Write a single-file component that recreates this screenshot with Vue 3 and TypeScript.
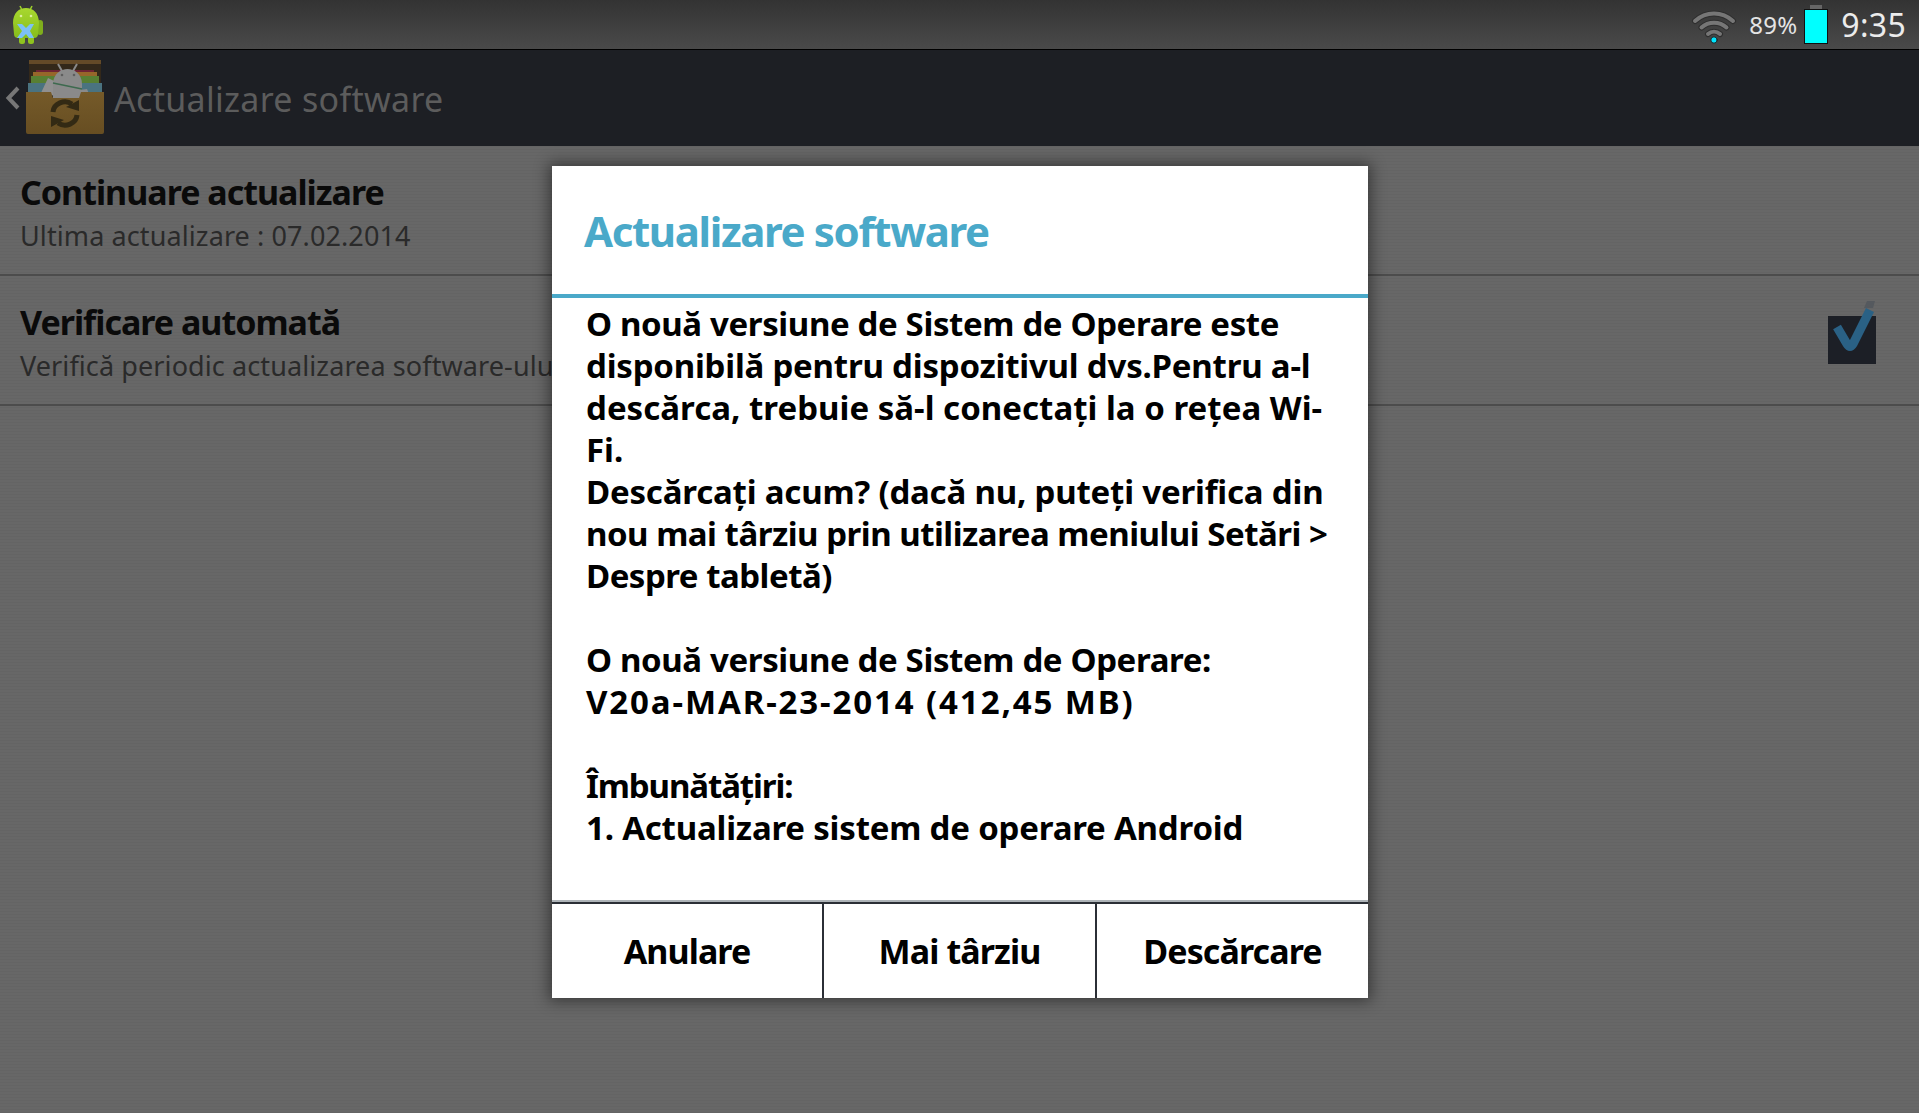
<template>
  <div class="screen">
    <!-- Status bar -->
    <div class="status-bar">
      <svg class="notif-icon" width="32" height="40" viewBox="0 0 32 40">
        <defs>
          <linearGradient id="lime" x1="0" y1="0" x2="0" y2="1">
            <stop offset="0" stop-color="#a8d82f" />
            <stop offset="1" stop-color="#86bd1c" />
          </linearGradient>
        </defs>
        <line x1="8" y1="1" x2="10" y2="5" stroke="#9ccf2b" stroke-width="1.5" />
        <line x1="20" y1="1" x2="18" y2="5" stroke="#9ccf2b" stroke-width="1.5" />
        <rect x="25" y="15" width="6" height="15" rx="3" fill="#7fae1c" />
        <rect x="7" y="30" width="6" height="9" rx="2.500" fill="#8fc31f" />
        <rect x="16" y="30" width="6" height="9" rx="2.500" fill="#8fc31f" />
        <path d="M1 18 C1 8 7 3 14 3 C21 3 27 8 27 18 L26 29 Q26 33 22 33 L6 33 Q2 33 2 29 Z" fill="url(#lime)" />
        <circle cx="9" cy="11" r="1.300" fill="#dcefa0" />
        <circle cx="19" cy="11" r="1.300" fill="#dcefa0" />
        <path d="M5 19 L10 19 L14 23 L18 19 L22 19 L18 26 L22 33 L17 33 L14 29 L10 33 L5 33 L10 26 Z" fill="#7cc0f5" />
      </svg>
      <div class="status-right">
        <svg class="wifi" width="46" height="36" viewBox="0 0 46 36" fill="none" stroke-linecap="round">
          <g stroke="#2e2e2e" stroke-width="6">
            <path d="M4 13 C15 3 31 3 42 13" />
            <path d="M10.500 19.500 C17.500 13 28.500 13 35.500 19.500" />
            <path d="M17 26 C20.500 23 25.500 23 29 26" />
          </g>
          <g stroke="#767676" stroke-width="4">
            <path d="M4 13 C15 3 31 3 42 13" />
            <path d="M10.500 19.500 C17.500 13 28.500 13 35.500 19.500" />
            <path d="M17 26 C20.500 23 25.500 23 29 26" />
          </g>
          <circle cx="23" cy="32" r="3.200" fill="#00e5ff" stroke="#222" stroke-width="1" />
        </svg>
        <span class="percent">89%</span>
        <div class="battery"><div class="battery-cap"></div><div class="battery-body"></div></div>
        <span class="clock">9:35</span>
      </div>
    </div>

    <!-- Action bar -->
    <div class="action-bar">
      <svg class="back" width="16" height="24" viewBox="0 0 16 24" fill="none">
        <path d="M13 2 L3.500 12 L13 22" stroke="#777" stroke-width="4" />
      </svg>
      <svg class="app-icon" width="80" height="76" viewBox="0 0 80 76">
        <defs>
          <linearGradient id="crate" x1="0" y1="0" x2="0" y2="1">
            <stop offset="0" stop-color="#755a29" />
            <stop offset="1" stop-color="#674e22" />
          </linearGradient>
        </defs>
        <rect x="4" y="0" width="72" height="34" fill="#33281a" />
        <rect x="4" y="0" width="72" height="4" fill="#644a28" />
        <rect x="11" y="10" width="58" height="3" fill="#6e2434" />
        <rect x="8" y="12" width="64" height="5" fill="#96662a" />
        <rect x="6" y="16" width="68" height="8" fill="#587f33" />
        <rect x="3" y="23" width="74" height="11" fill="#4a7380" />
        <path d="M16 33 L23 18 L29 21 L30 36 Z" fill="#909090" />
        <path d="M55 30 L62 29 L64 34 L55 36 Z" fill="#8a8a8a" />
        <path d="M28 24 C28 14 36 9 42.500 9 C49 9 57 14 57 24 L57 38 L28 38 Z" fill="#8a8a8a" />
        <line x1="33" y1="4" x2="37" y2="11" stroke="#8a8a8a" stroke-width="2" />
        <line x1="52" y1="4" x2="48" y2="11" stroke="#8a8a8a" stroke-width="2" />
        <circle cx="37" cy="15" r="1.300" fill="#5e5e5e" />
        <circle cx="49" cy="15" r="1.300" fill="#5e5e5e" />
        <line x1="28" y1="23" x2="57" y2="29" stroke="#3d6a4e" stroke-width="1.500" />
        <path d="M1 32 L26 32 L28 38 L54 38 L56 32 L79 32 L79 72 Q79 74 77 74 L3 74 Q1 74 1 72 Z" fill="url(#crate)" />
        <path d="M28 52 A12 11 0 0 1 47 44" fill="none" stroke="#332a14" stroke-width="5" />
        <path d="M41 47 L54 51 L54 40 Z" fill="#332a14" />
        <path d="M52 55 A12 11 0 0 1 33 63" fill="none" stroke="#332a14" stroke-width="5" />
        <path d="M39 60 L26 56 L26 67 Z" fill="#332a14" />
      </svg>
      <span class="action-title">Actualizare software</span>
    </div>

    <!-- Settings list -->
    <div class="setting-row">
      <div>
        <div class="setting-title">Continuare actualizare</div>
        <div class="setting-sub">Ultima actualizare : 07.02.2014</div>
      </div>
    </div>
    <div class="setting-row">
      <div>
        <div class="setting-title">Verificare automată</div>
        <div class="setting-sub">Verifică periodic actualizarea software-ului</div>
      </div>
      <div class="checkbox">
        <svg width="50" height="62" viewBox="0 0 50 62" fill="none">
          <path d="M9 27 L19 44 Q22 49 25 44 L42 10" stroke="#2a6185" stroke-width="9" stroke-linejoin="round" />
          <path d="M36 8 L39 1 L47 1 L45 8 Z" fill="#55595e" />
        </svg>
      </div>
    </div>

    <!-- Dialog -->
    <div class="dialog">
      <div class="dialog-title">Actualizare software</div>
      <div class="dialog-body">
        <p
          v-for="(line, i) in lines"
          :key="i"
          :style="{ letterSpacing: `${line.track}px` }"
        >{{ line.text || '\u00a0' }}</p>
      </div>
      <div class="dialog-buttons">
        <button v-for="b in buttons" :key="b">{{ b }}</button>
      </div>
    </div>
  </div>
</template>

<script setup lang="ts">
interface BodyLine {
  text: string
  track: number
}

const lines: BodyLine[] = [
  { text: 'O nouă versiune de Sistem de Operare este', track: -0.37 },
  { text: 'disponibilă pentru dispozitivul dvs.Pentru a-l', track: -0.21 },
  { text: 'descărca, trebuie să-l conectați la o rețea Wi-', track: 0.02 },
  { text: 'Fi.', track: 0 },
  { text: 'Descărcați acum? (dacă nu, puteți verifica din', track: -0.19 },
  { text: 'nou mai târziu prin utilizarea meniului Setări >', track: -0.49 },
  { text: 'Despre tabletă)', track: -0.5 },
  { text: '', track: 0 },
  { text: 'O nouă versiune de Sistem de Operare:', track: -0.37 },
  { text: 'V20a-MAR-23-2014 (412,45 MB)', track: 1.88 },
  { text: '', track: 0 },
  { text: 'Îmbunătățiri:', track: -1.1 },
  { text: '1. Actualizare sistem de operare Android', track: -0.2 },
]

const buttons: string[] = ['Anulare', 'Mai târziu', 'Descărcare']
</script>

<style>
html,
body {
  margin: 0;
  background: #666;
}
</style>

<style scoped>
.screen {
  position: relative;
  width: 1919px;
  height: 1113px;
  overflow: hidden;
  background-color: #676767;
  background-image: repeating-linear-gradient(0deg, rgba(0, 0, 0, 0.03) 0 1px, transparent 1px 3px);
  font-family: 'Noto Sans', sans-serif;
}

.status-bar {
  display: flex;
  justify-content: space-between;
  align-items: center;
  height: 49px;
  padding: 0 13px 0 10px;
  background: linear-gradient(#333333, #4a4a4a);
  border-bottom: 1px solid #000;
}

.notif-icon {
  margin-left: 2px;
  margin-top: 1px;
}

.status-right {
  display: flex;
  align-items: center;
}

.wifi {
  margin-top: 2px;
}

.percent {
  margin-left: 12px;
  font-size: 24px;
  letter-spacing: 0.2px;
  color: #e4e4e4;
}

.battery {
  margin-left: 7px;
  display: flex;
  flex-direction: column;
  align-items: center;
}

.battery-cap {
  width: 12px;
  height: 4px;
  background: #666;
}

.battery-body {
  width: 22px;
  height: 33px;
  background: #00ffff;
  border: 1px solid #111;
}

.clock {
  margin-left: 13px;
  font-size: 32px;
  letter-spacing: 0.3px;
  color: #ececec;
}

.action-bar {
  display: flex;
  align-items: center;
  height: 96px;
  background: #1d1f24;
}

.back {
  margin-left: 5px;
}

.app-icon {
  margin-left: 4px;
}

.action-title {
  margin: 2px 0 0 9px;
  font-size: 34px;
  letter-spacing: 0.3px;
  color: #5c5c5c;
}

.setting-row {
  display: flex;
  justify-content: space-between;
  align-items: center;
  box-sizing: border-box;
  height: 130px;
  padding: 4px 43px 0 20px;
  border-bottom: 2px solid #4c4c4c;
}

.setting-title {
  margin-top: 1px;
  font-size: 34px;
  font-weight: 700;
  letter-spacing: -1px;
  line-height: 44px;
  color: #0a0a0a;
}

.setting-sub {
  margin-top: 3px;
  font-size: 27px;
  letter-spacing: 0.1px;
  line-height: 38px;
  color: #2a2a2a;
}

.checkbox {
  position: relative;
  width: 48px;
  height: 48px;
  margin-top: -4px;
  background: #1c1f26;
}

.checkbox svg {
  position: absolute;
  left: 0;
  top: -16px;
}

.dialog {
  position: absolute;
  left: 552px;
  top: 166px;
  display: flex;
  flex-direction: column;
  width: 816px;
  height: 832px;
  background: #fff;
  box-shadow: 0 0 14px 3px rgba(0, 0, 0, 0.45);
}

.dialog-title {
  box-sizing: border-box;
  height: 132px;
  padding: 0 32px;
  border-bottom: 4px solid #4aa9c9;
  font-size: 42px;
  font-weight: 700;
  letter-spacing: -1.37px;
  line-height: 130px;
  color: #4aa9c9;
}

.dialog-body {
  flex: 1;
  padding: 5px 34px 0;
}

.dialog-body p {
  margin: 0;
  font-size: 33px;
  font-weight: 700;
  line-height: 42px;
  color: #000;
  white-space: nowrap;
}

.dialog-buttons {
  display: grid;
  grid-template-columns: 270px 273px 1fr;
  box-sizing: border-box;
  height: 98px;
  border-top: 2px solid #aeb4b8;
  box-shadow: inset 0 2px 0 #2b2f36;
}

.dialog-buttons button {
  padding: 2px 0 0;
  border: none;
  border-left: 2px solid #2b2f36;
  background: none;
  font-family: inherit;
  font-size: 34px;
  font-weight: 700;
  letter-spacing: -0.9px;
  color: #000;
}

.dialog-buttons button:first-child {
  border-left: none;
}
</style>
